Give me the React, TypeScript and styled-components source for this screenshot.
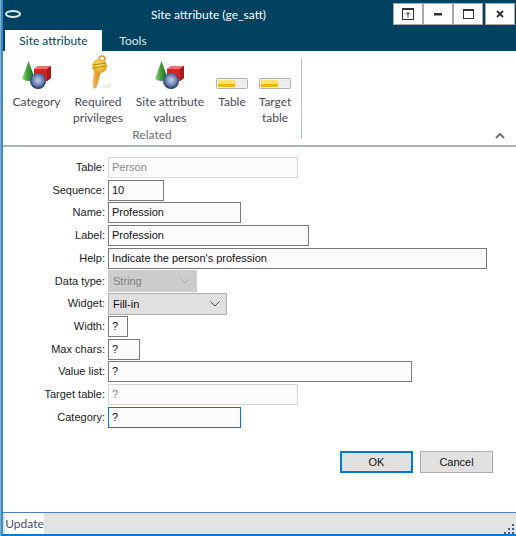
import React from "react";
import styled, { createGlobalStyle } from "styled-components";

const GlobalStyle = createGlobalStyle`
  html, body {
    margin: 0;
    padding: 0;
    background: #9aa7ad;
    overflow: hidden;
  }
`;

const Window = styled.div`
  width: 515px;
  height: 536px;
  margin-left: 1px;
  box-sizing: border-box;
  display: flex;
  flex-direction: column;
  border-left: 2px solid #2b8fdc;
  border-bottom: 2px solid #1079c9;
  background: #fff;
  font-family: Lato, "Liberation Sans", sans-serif;
  font-size: 12px;
  overflow: hidden;
`;

const Header = styled.div`
  height: 51px;
  flex: none;
  background: #00425f;
  display: flex;
  flex-direction: column;
`;

const TitleRow = styled.div`
  height: 30px;
  display: flex;
  align-items: flex-start;
`;

const Logo = styled.svg`
  width: 18px;
  height: 10px;
  margin: 9px 2px 0 1px;
  flex: none;
`;

const Title = styled.div`
  flex: 1;
  text-align: center;
  color: #fff;
  font-size: 12px;
  line-height: 30px;
`;

const WinButtons = styled.div`
  display: flex;
  margin: 3px 1px 0 0;
`;

const WinButton = styled.div<{ $gap?: number }>`
  width: 30px;
  height: 22px;
  box-sizing: border-box;
  margin-left: ${(p) => p.$gap ?? 0}px;
  background: #fff;
  border: 1px solid #a9a9a9;
  display: flex;
  align-items: center;
  justify-content: center;
`;

const TabRow = styled.div`
  height: 21px;
  display: flex;
  padding-left: 2px;
`;

const Tab = styled.div<{ $active?: boolean }>`
  width: ${(p) => (p.$active ? 97 : 62)}px;
  text-align: center;
  line-height: 22px;
  font-size: 12px;
  background: ${(p) => (p.$active ? "#fff" : "transparent")};
  color: ${(p) => (p.$active ? "#00425f" : "#dfe8ec")};
`;

const Ribbon = styled.div`
  height: 96px;
  flex: none;
  box-sizing: border-box;
  border-bottom: 2px solid #a9b4bb;
  display: flex;
  position: relative;
`;

const RibbonGroup = styled.div`
  width: 299px;
  box-sizing: border-box;
  margin-top: 8px;
  height: 80px;
  border-right: 1px solid #b4bcc6;
  display: flex;
  flex-direction: column;
  align-items: stretch;
`;

const RibbonItems = styled.div`
  display: flex;
  gap: 13px;
  padding-left: 10px;
  margin-top: -6px;
`;

const RibbonItem = styled.div<{ $width: number }>`
  width: ${(p) => p.$width}px;
  display: flex;
  flex-direction: column;
  align-items: center;
  color: #4a4a55;
  text-align: center;
  line-height: 16px;
  white-space: nowrap;
`;

const IconSlot = styled.div`
  height: 36px;
  margin-bottom: 5px;
  display: flex;
  align-items: flex-end;
  justify-content: center;
`;

const GroupLabel = styled.div`
  text-align: center;
  color: #6a7078;
  line-height: 16px;
  margin-top: auto;
  transform: translateY(1px);
`;

const Collapse = styled.svg`
  position: absolute;
  right: 11px;
  bottom: 6px;
  width: 10px;
  height: 7px;
`;

const FormArea = styled.div`
  flex: 1;
  box-sizing: border-box;
  padding: 10px 0 0 0;
  display: flex;
  flex-direction: column;
  font-family: "Liberation Sans", Arial, sans-serif;
  font-size: 11px;
`;

const FormGrid = styled.div`
  display: grid;
  grid-template-columns: 102px 1fr;
  column-gap: 3px;
  row-gap: 1.73px;
  grid-auto-rows: 21px;
  align-items: center;
`;

const FieldLabel = styled.label`
  text-align: right;
  color: #1a1a1a;
  white-space: nowrap;
  line-height: 21px;
`;

const Field = styled.div<{ $width: number; $state?: "disabled" | "focus" }>`
  width: ${(p) => p.$width}px;
  height: 21px;
  box-sizing: border-box;
  padding-left: 3px;
  line-height: 18px;
  white-space: nowrap;
  background: #fbfbfb;
  color: ${(p) => (p.$state === "disabled" ? "#8a8a8a" : "#111")};
  border: 1px solid
    ${(p) =>
      p.$state === "disabled"
        ? "#d6d6d6"
        : p.$state === "focus"
          ? "#0078d7"
          : "#7a7a7a"};
`;

const Combo = styled.div<{ $width: number; $disabled?: boolean }>`
  width: ${(p) => p.$width}px;
  height: 22px;
  box-sizing: border-box;
  padding: 0 6px 0 4px;
  display: flex;
  align-items: center;
  justify-content: space-between;
  background: ${(p) => (p.$disabled ? "#cccccc" : "#e1e1e1")};
  color: ${(p) => (p.$disabled ? "#7f7f7f" : "#111")};
  border: 1px solid ${(p) => (p.$disabled ? "#cccccc" : "#adadad")};
`;

const ButtonRow = styled.div`
  display: flex;
  gap: 7px;
  margin: 23px 0 0 337px;
`;

const DialogButton = styled.button<{ $default?: boolean }>`
  width: 73px;
  height: 22px;
  padding: 0;
  box-sizing: border-box;
  background: #e1e1e1;
  font: inherit;
  color: #111;
  border: ${(p) => (p.$default ? "2px solid #0078d7" : "1px solid #adadad")};
`;

const StatusBar = styled.div`
  height: 22px;
  flex: none;
  box-sizing: border-box;
  border-top: 1px solid #4f7fb5;
  background: #e3e3e3;
  display: flex;
  justify-content: space-between;
  align-items: stretch;
`;

const StatusText = styled.div`
  width: 39px;
  margin-left: 2px;
  background: #fff;
  color: #4a4a6a;
  line-height: 22px;
  text-align: center;
`;

const Grip = styled.svg`
  width: 11px;
  height: 11px;
  align-self: flex-end;
  margin-right: 1px;
`;

const ShapesIcon = ({ id }: { id: string }) => (
  <svg width="30" height="28" viewBox="0 0 30 28">
    <defs>
      <linearGradient id={`${id}-cone`} x1="0" x2="1" y1="0" y2="0">
        <stop offset="0" stopColor="#9ad68a" />
        <stop offset="0.45" stopColor="#3d9f38" />
        <stop offset="1" stopColor="#12651a" />
      </linearGradient>
      <radialGradient id={`${id}-ball`} cx="0.5" cy="0.45" r="0.55">
        <stop offset="0" stopColor="#c8d2e6" />
        <stop offset="0.6" stopColor="#6b82b4" />
        <stop offset="1" stopColor="#1c2c5c" />
      </radialGradient>
    </defs>
    <path d="M12 8 L16 5 L29 5 L29 17 L25 20 L12 20 Z" fill="#d42424" />
    <path d="M12 8 L16 5 L29 5 L25 8 Z" fill="#f07070" />
    <path d="M25 8 L29 5 L29 17 L25 20 Z" fill="#a81818" />
    <path d="M6.5 0 L0 18 Q6 22 13 18 Z" fill={`url(#${id}-cone)`} />
    <circle cx="16" cy="20" r="8" fill={`url(#${id}-ball)`} />
  </svg>
);

const KeyIcon = () => (
  <svg width="26" height="36" viewBox="0 0 26 36">
    <defs>
      <linearGradient id="key-blade" x1="0" x2="1" y1="0" y2="0">
        <stop offset="0" stopColor="#f8c060" />
        <stop offset="1" stopColor="#d88418" />
      </linearGradient>
      <radialGradient id="key-head" cx="0.45" cy="0.4" r="0.7">
        <stop offset="0" stopColor="#fbe680" />
        <stop offset="0.7" stopColor="#e8b420" />
        <stop offset="1" stopColor="#b87a10" />
      </radialGradient>
    </defs>
    <path d="M14 35 Q20 31 26 30 L26 35 Z" fill="#ececec" />
    <path d="M9 18 L15.5 20 L11.5 35 L8.5 35.5 L7.5 30 Z" fill="url(#key-blade)" />
    <circle cx="17" cy="6" r="3" fill="none" stroke="#e0963a" strokeWidth="1.5" />
    <ellipse cx="14.5" cy="13" rx="7.5" ry="7" fill="url(#key-head)" />
    <path d="M8 12 L21 10 M8 15 L21 13" stroke="#b8860b" strokeWidth="1" />
  </svg>
);

const BarIcon = () => (
  <svg width="32" height="11" viewBox="0 0 32 11">
    <rect x="0.5" y="0.5" width="31" height="10" rx="1" fill="#f2f2f2" stroke="#b0b0b0" />
    <rect x="2" y="2" width="28" height="7" fill="#ececec" />
    <rect x="2" y="2" width="17" height="4" fill="#fbe26a" />
    <rect x="2" y="6" width="17" height="3" fill="#f0b800" />
  </svg>
);

const fields = [
  { label: "Sequence:", value: "10", width: 56 },
  { label: "Name:", value: "Profession", width: 133 },
  { label: "Label:", value: "Profession", width: 201 },
  { label: "Help:", value: "Indicate the person's profession", width: 379 },
];

const lowerFields = [
  { label: "Width:", value: "?", width: 20 },
  { label: "Max chars:", value: "?", width: 32 },
  { label: "Value list:", value: "?", width: 304 },
];

const Chevron = ({ color }: { color: string }) => (
  <svg width="10" height="6" viewBox="0 0 10 6">
    <path d="M0.5 0.5 L5 5 L9.5 0.5" fill="none" stroke={color} strokeWidth="1" />
  </svg>
);

export default function App() {
  return (
    <>
      <GlobalStyle />
      <Window>
        <Header>
          <TitleRow>
            <Logo viewBox="0 0 18 10">
              <ellipse cx="9" cy="5" rx="7" ry="3" fill="none" stroke="#dfe8ec" strokeWidth="2" />
            </Logo>
            <Title>Site attribute (ge_satt)</Title>
            <WinButtons>
              <WinButton>
                <svg width="12" height="12" viewBox="0 0 12 12">
                  <rect x="0.5" y="0.5" width="11" height="11" fill="none" stroke="#333" />
                  <path d="M0 1.5 H12" stroke="#333" />
                  <path d="M6 9.5 V4.5 M4 6.5 L6 4.5 L8 6.5" fill="none" stroke="#333" />
                </svg>
              </WinButton>
              <WinButton>
                <svg width="8" height="3" viewBox="0 0 8 3">
                  <rect width="8" height="2.5" fill="#333" />
                </svg>
              </WinButton>
              <WinButton>
                <svg width="11" height="10" viewBox="0 0 11 10">
                  <rect x="0.5" y="0.5" width="10" height="9" fill="none" stroke="#333" />
                  <rect width="11" height="2" fill="#333" />
                </svg>
              </WinButton>
              <WinButton $gap={2}>
                <svg width="8" height="8" viewBox="0 0 8 8">
                  <path d="M1 1 L7 7 M7 1 L1 7" stroke="#333" strokeWidth="2" />
                </svg>
              </WinButton>
            </WinButtons>
          </TitleRow>
          <TabRow>
            <Tab $active>Site attribute</Tab>
            <Tab>Tools</Tab>
          </TabRow>
        </Header>

        <Ribbon>
          <RibbonGroup>
            <RibbonItems>
              <RibbonItem $width={47}>
                <IconSlot><ShapesIcon id="cat" /></IconSlot>
                Category
              </RibbonItem>
              <RibbonItem $width={50}>
                <IconSlot><KeyIcon /></IconSlot>
                Required<br />privileges
              </RibbonItem>
              <RibbonItem $width={68}>
                <IconSlot><ShapesIcon id="val" /></IconSlot>
                Site attribute<br />values
              </RibbonItem>
              <RibbonItem $width={30}>
                <IconSlot><BarIcon /></IconSlot>
                Table
              </RibbonItem>
              <RibbonItem $width={30}>
                <IconSlot><BarIcon /></IconSlot>
                Target<br />table
              </RibbonItem>
            </RibbonItems>
            <GroupLabel>Related</GroupLabel>
          </RibbonGroup>
          <Collapse viewBox="0 0 10 7">
            <path d="M1 6 L5 2 L9 6" fill="none" stroke="#707070" strokeWidth="2" />
          </Collapse>
        </Ribbon>

        <FormArea>
          <FormGrid>
            <FieldLabel>Table:</FieldLabel>
            <Field $width={190} $state="disabled">Person</Field>
            {fields.map((f) => (
              <React.Fragment key={f.label}>
                <FieldLabel>{f.label}</FieldLabel>
                <Field $width={f.width}>{f.value}</Field>
              </React.Fragment>
            ))}
            <FieldLabel>Data type:</FieldLabel>
            <Combo $width={89} $disabled>String<Chevron color="#a8a8a8" /></Combo>
            <FieldLabel>Widget:</FieldLabel>
            <Combo $width={119}>Fill-in<Chevron color="#444" /></Combo>
            {lowerFields.map((f) => (
              <React.Fragment key={f.label}>
                <FieldLabel>{f.label}</FieldLabel>
                <Field $width={f.width}>{f.value}</Field>
              </React.Fragment>
            ))}
            <FieldLabel>Target table:</FieldLabel>
            <Field $width={190} $state="disabled">?</Field>
            <FieldLabel>Category:</FieldLabel>
            <Field $width={133} $state="focus">?</Field>
          </FormGrid>
          <ButtonRow>
            <DialogButton $default>OK</DialogButton>
            <DialogButton>Cancel</DialogButton>
          </ButtonRow>
        </FormArea>

        <StatusBar>
          <StatusText>Update</StatusText>
          <Grip viewBox="0 0 11 11">
            <path d="M8 1h2v2H8zM4 5h2v2H4zM8 5h2v2H8zM0 9h2v2H0zM4 9h2v2H4zM8 9h2v2H8z" fill="#3f5f8a" />
          </Grip>
        </StatusBar>
      </Window>
    </>
  );
}
